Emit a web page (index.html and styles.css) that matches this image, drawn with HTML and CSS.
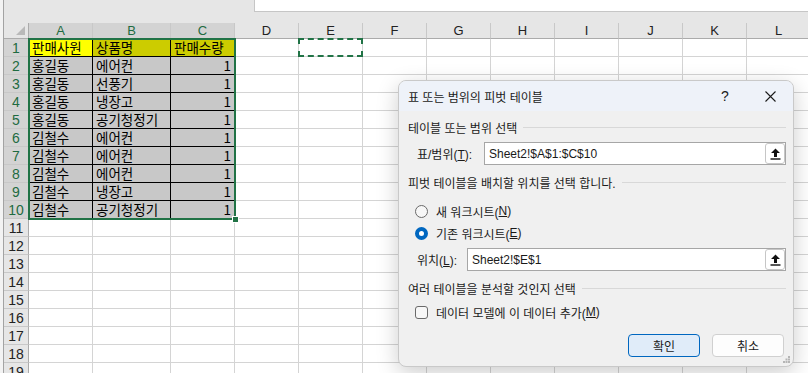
FILE: index.html
```html
<!DOCTYPE html>
<html lang="ko">
<head>
    <meta charset="UTF-8">
    <title>피벗 테이블 만들기</title>
    <link rel="stylesheet" href="styles.css">
</head>
<body>
  <div class="app">
    <div class="edge"></div>
    <div class="main">
      <div class="formula-row">
        <div class="namebox"></div>
        <div class="formula"></div>
      </div>
      <div class="sheet" id="sheet">
        <div class="corner"><span class="tri"></span></div>
      </div>
    </div>

    <div class="dialog">
      <div class="dlg-title">
        <span class="dlg-name">표 또는 범위의 피벗 테이블</span>
        <span class="dlg-help">?</span>
        <span class="dlg-close">
          <svg width="11" height="11" viewBox="0 0 11 11"><path d="M0.5 0.5 L10.5 10.5 M10.5 0.5 L0.5 10.5" stroke="#1b1b1b" stroke-width="1.1" fill="none"/></svg>
        </span>
      </div>
      <div class="dlg-body">
        <div class="section">테이블 또는 범위 선택</div>
        <div class="field">
          <label class="lbl lbl-range">표/범위(<u>T</u>):</label>
          <div class="input">
            <span>Sheet2!$A$1:$C$10</span>
            <span class="ref-btn">
              <svg width="11" height="12" viewBox="0 0 11 12"><path d="M5.5 0.5 L10 5 H7 V9 H4 V5 H1 Z" fill="#111"/><rect x="0.5" y="10.3" width="10" height="1.4" fill="#111"/></svg>
            </span>
          </div>
        </div>
        <div class="section section-2">피벗 테이블을 배치할 위치를 선택 합니다.</div>
        <div class="option opt-1"><span class="radio"></span>새 워크시트(<u>N</u>)</div>
        <div class="option opt-2"><span class="radio on"></span>기존 워크시트(<u>E</u>)</div>
        <div class="field field-2">
          <label class="lbl lbl-loc">위치(<u>L</u>):</label>
          <div class="input">
            <span>Sheet2!$E$1</span>
            <span class="ref-btn">
              <svg width="11" height="12" viewBox="0 0 11 12"><path d="M5.5 0.5 L10 5 H7 V9 H4 V5 H1 Z" fill="#111"/><rect x="0.5" y="10.3" width="10" height="1.4" fill="#111"/></svg>
            </span>
          </div>
        </div>
        <div class="section section-3">여러 테이블을 분석할 것인지 선택</div>
        <div class="option opt-check"><span class="check"></span>데이터 모델에 이 데이터 추가(<u>M</u>)</div>
        <div class="buttons">
          <button class="btn btn-ok">확인</button>
          <button class="btn">취소</button>
        </div>
      </div>
      <svg class="grip" width="7" height="7" viewBox="0 0 7 7">
        <rect x="5" y="0" width="2" height="2" fill="#b5b5b5"/>
        <rect x="2.5" y="2.5" width="2" height="2" fill="#b5b5b5"/>
        <rect x="5" y="2.5" width="2" height="2" fill="#b5b5b5"/>
        <rect x="0" y="5" width="2" height="2" fill="#b5b5b5"/>
        <rect x="2.5" y="5" width="2" height="2" fill="#b5b5b5"/>
        <rect x="5" y="5" width="2" height="2" fill="#b5b5b5"/>
      </svg>
    </div>
  </div>

  <script>
    const data = [
      ['판매사원', '상품명', '판매수량'],
      ['홍길동', '에어컨', 1],
      ['홍길동', '선풍기', 1],
      ['홍길동', '냉장고', 1],
      ['홍길동', '공기청정기', 1],
      ['김철수', '에어컨', 1],
      ['김철수', '에어컨', 1],
      ['김철수', '에어컨', 1],
      ['김철수', '냉장고', 1],
      ['김철수', '공기청정기', 1]
    ];
    const cols = 'ABCDEFGHIJKL'.split('');
    const sheet = document.getElementById('sheet');

    function add(cls, text) {
        const d = document.createElement('div');
        d.className = cls;
        if (text !== undefined) d.textContent = text;
        sheet.appendChild(d);
        return d;
    }

    cols.forEach((c, i) => add('ch' + (i < 3 ? ' sel' : ''), c));

    for (let r = 1; r <= 19; r++) {
        const row = data[r - 1];
        add('rh' + (row ? ' sel' : ''), r);
        cols.forEach((c, i) => {
            if (row && i < 3) {
                let cls = 'cell filled';
                if (r === 1) cls += i === 0 ? ' hl-yellow' : ' hl-olive';
                if (typeof row[i] === 'number') cls += ' num';
                add(cls, row[i]);
            } else {
                add('cell');
            }
        });
    }

    const sel = add('selection');
    sel.appendChild(document.createElement('span')).className = 'handle';
    add('ants');
  </script>
</body>
</html>
```

FILE: styles.css
```css
* {
    box-sizing: border-box;
}

body {
    margin: 0;
    background: #fff;
    font-family: 'Noto Sans CJK KR', sans-serif;
}

.app {
    position: relative;
    width: 808px;
    height: 373px;
    overflow: hidden;
    display: flex;
    background: #fff;
}

.edge {
    width: 3px;
    background: #f3f3f3;
    flex: none;
}

.main {
    flex: 1;
    border-left: 1px solid #a3a3a3;
    display: flex;
    flex-direction: column;
    background: #e6e6e6;
}

/* formula bar strip */
.formula-row {
    display: flex;
    height: 12px;
    flex: none;
}

.namebox {
    width: 250px;
}

.formula {
    flex: 1;
    background: #fff;
    border-left: 1px solid #c6c6c6;
    border-bottom: 1px solid #c6c6c6;
}

/* worksheet grid */
.sheet {
    margin-top: 11px;
    display: grid;
    grid-template-columns: 25px 64px 78px 64px repeat(9, 64px);
    grid-template-rows: 16px;
    grid-auto-rows: 18px;
    background: #fff;
    position: relative;
}

.corner {
    background: #e6e6e6;
    border-right: 1px solid #ababab;
    border-bottom: 1px solid #ababab;
    display: flex;
    align-items: flex-end;
    justify-content: flex-end;
    padding: 0 3px 3px 0;
}

.tri {
    width: 0;
    height: 0;
    border-left: 9px solid transparent;
    border-bottom: 9px solid #b9b9b9;
}

.ch {
    background: #e6e6e6;
    border-right: 1px solid #c8c8c8;
    border-bottom: 1px solid #ababab;
    font: 13px 'Liberation Sans', sans-serif;
    color: #222;
    text-align: center;
    line-height: 15px;
}

.rh {
    background: #e6e6e6;
    border-right: 1px solid #ababab;
    border-bottom: 1px solid #c8c8c8;
    font: 14px 'Liberation Sans', sans-serif;
    color: #222;
    text-align: center;
    line-height: 18px;
}

.ch.sel, .rh.sel {
    background: #d3d3d3;
    color: #1e6b41;
}

.cell {
    border-right: 1px solid #d4d4d4;
    border-bottom: 1px solid #d4d4d4;
    font-size: 13.5px;
    line-height: 17px;
    color: #000;
    padding: 0 3px;
    white-space: nowrap;
}

.cell.filled {
    background: #c8c8c8;
    border-color: #000;
}

.cell.hl-yellow {
    background: #ffff00;
}

.cell.hl-olive {
    background: #cccc00;
}

.cell.num {
    text-align: right;
}

/* overlays sit on the grid area without taking part in placement */
.selection {
    position: absolute;
    grid-column: 2 / 5;
    grid-row: 2 / 12;
    top: -1px;
    left: -1px;
    right: -1px;
    bottom: -1px;
    border: 2px solid #217346;
    pointer-events: none;
}

.handle {
    position: absolute;
    right: -5px;
    bottom: -5px;
    width: 7px;
    height: 7px;
    background: #217346;
    border: 1px solid #fff;
}

.ants {
    position: absolute;
    grid-column: 6 / 7;
    grid-row: 2 / 3;
    top: -1px;
    left: -1px;
    right: 0;
    bottom: 0;
    border: 2px dashed #217346;
}

/* dialog */
.dialog {
    position: absolute;
    left: 398px;
    top: 80px;
    width: 396px;
    height: 287px;
    background: #f0f0f0;
    border: 1px solid #c9c9c9;
    border-radius: 8px;
    box-shadow: 0 6px 22px rgba(0, 0, 0, 0.2);
    overflow: hidden;
    font: 12px 'Liberation Sans', 'Noto Sans CJK KR', sans-serif;
    color: #1a1a1a;
}

.dlg-title {
    height: 30px;
    background: #eef2f9;
    display: flex;
    align-items: center;
    padding-left: 9px;
}

.dlg-name {
    flex: 1;
}

.dlg-help {
    width: 26px;
    text-align: center;
    font-size: 14px;
    margin-right: 19px;
}

.dlg-close {
    width: 26px;
    margin-right: 10px;
    display: flex;
    justify-content: center;
}

.dlg-body {
    padding: 6px 7px 0 9px;
}

.section {
    height: 20px;
    display: flex;
    align-items: center;
    white-space: nowrap;
}

.section::after {
    content: '';
    flex: 1;
    margin-left: 6px;
    border-top: 1px solid #d8d8d8;
}

.section-2, .section-3 {
    margin-top: 7px;
}

.field {
    margin-top: 5px;
    height: 23px;
    display: flex;
    align-items: center;
}

.lbl {
    padding-left: 9px;
    flex: none;
}

.lbl-range {
    width: 76px;
}

.lbl-loc {
    width: 59px;
}

.input {
    flex: 1;
    height: 23px;
    background: #fff;
    border: 1px solid #a6a6a6;
    display: flex;
    align-items: center;
    padding-left: 4px;
}

.ref-btn {
    margin-left: auto;
    width: 20px;
    height: 21px;
    border: 1px solid #c6c6c6;
    border-radius: 3px;
    background: #fff;
    display: flex;
    align-items: center;
    justify-content: center;
}

.option {
    height: 20px;
    display: flex;
    align-items: center;
    padding-left: 7px;
}

.opt-1 {
    margin-top: 9px;
}

.opt-2 {
    margin-top: 2px;
}

.opt-check {
    margin-top: 4px;
}

.radio {
    width: 13px;
    height: 13px;
    border-radius: 50%;
    border: 1px solid #6a6a6a;
    background: #f7f7f7;
    margin-right: 8px;
}

.radio.on {
    border: 4px solid #0067c0;
    background: #fff;
}

.check {
    width: 13px;
    height: 13px;
    border-radius: 3px;
    border: 1px solid #6a6a6a;
    background: #f7f7f7;
    margin-right: 8px;
}

.buttons {
    margin-top: 12px;
    display: flex;
    justify-content: flex-end;
    gap: 12px;
    padding-right: 2px;
}

.btn {
    width: 72px;
    height: 23px;
    border: 1px solid #d0d0d0;
    border-radius: 4px;
    background: #fdfdfd;
    font: inherit;
    color: #1a1a1a;
}

.btn-ok {
    border-color: #0067c0;
    background: #e0ecf9;
}

.grip {
    position: absolute;
    right: 3px;
    bottom: 3px;
}
```
